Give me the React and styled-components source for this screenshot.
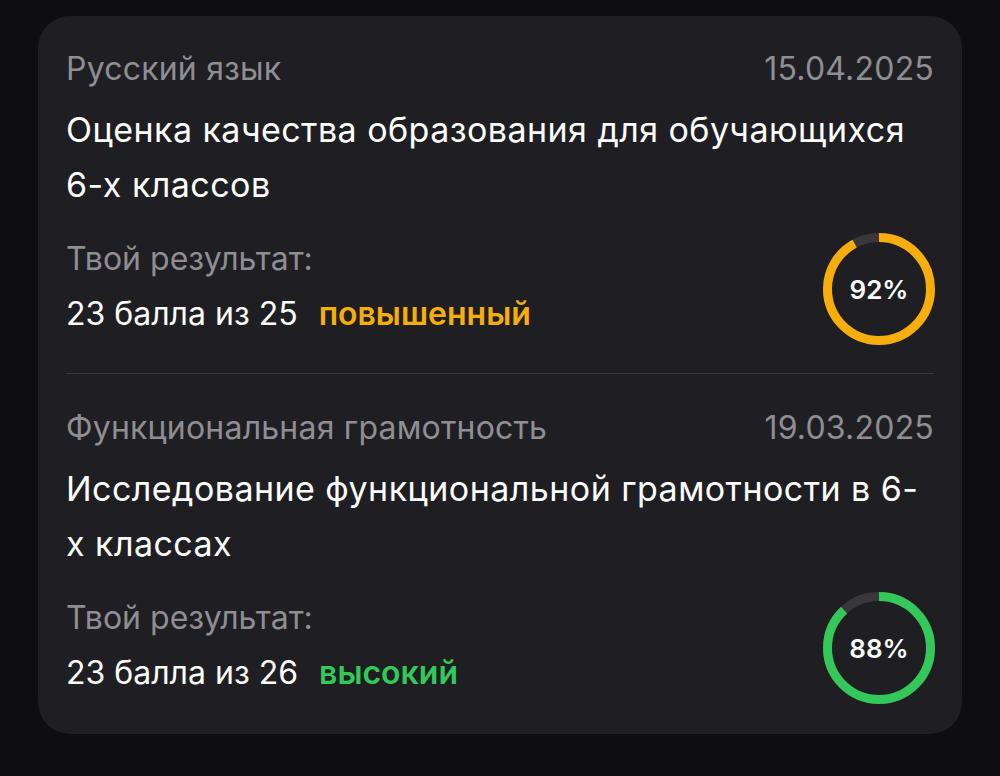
import React from "react";
import styled, { createGlobalStyle } from "styled-components";

const results = [
  {
    subject: "Русский язык",
    date: "15.04.2025",
    title: "Оценка качества образования для обучающихся 6-х классов",
    score: "23 балла из 25",
    level: "повышенный",
    color: "#f7ae0c",
    percent: 92,
  },
  {
    subject: "Функциональная грамотность",
    date: "19.03.2025",
    title: "Исследование функциональной грамотности в 6-х классах",
    score: "23 балла из 26",
    level: "высокий",
    color: "#34c759",
    percent: 88,
  },
];

const GlobalStyle = createGlobalStyle`
  body {
    margin: 0;
    background: #0e0d11;
    font-family: Inter, "Noto Sans", sans-serif;
    -webkit-font-smoothing: antialiased;
  }
`;

const Page = styled.div`
  padding: 16px 38px;
`;

const Card = styled.div`
  background: #1f1f23;
  border-radius: 32px;
  padding: 0 28px;
`;

const Section = styled.div`
  padding: ${(p) => (p.last ? "33px 0 30px" : "32px 0 28px")};
  border-bottom: ${(p) => (p.last ? "none" : "1px solid #36363a")};
`;

const Header = styled.div`
  display: flex;
  justify-content: space-between;
  align-items: center;
  height: 40px;
  font-size: 32px;
  letter-spacing: 0.2px;
  color: #8e8e93;
`;

const Title = styled.div`
  margin-top: 14px;
  margin-right: 8px;
  font-size: 34px;
  line-height: 55px;
  letter-spacing: 0.45px;
  color: #fff;
`;

const ResultRow = styled.div`
  display: flex;
  justify-content: space-between;
  align-items: center;
  margin-top: 21px;
`;

const ResultText = styled.div`
  padding-bottom: 5px;
`;

const Label = styled.div`
  font-size: 32px;
  line-height: 40px;
  color: #8e8e93;
`;

const Score = styled.div`
  margin-top: 15px;
  font-size: 32px;
  line-height: 40px;
  color: #fff;
`;

const Level = styled.span`
  margin-left: 21px;
  font-weight: 600;
  color: ${(p) => p.color};
`;

const RingWrap = styled.div`
  position: relative;
  width: 112px;
  height: 112px;
  margin-right: -1px;
`;

const RingText = styled.div`
  position: absolute;
  inset: 0;
  display: flex;
  align-items: center;
  justify-content: center;
  font-size: 26px;
  font-weight: 600;
  color: #fff;
`;

const Ring = ({ percent, color }) => {
  const r = 51.5;
  const c = 2 * Math.PI * r;
  return (
    <RingWrap>
      <svg width="112" height="112" viewBox="0 0 112 112">
        <circle cx="56" cy="56" r={r} fill="none" stroke="#38383b" strokeWidth="9" />
        <circle
          cx="56"
          cy="56"
          r={r}
          fill="none"
          stroke={color}
          strokeWidth="9"
          strokeDasharray={`${(c * percent) / 100} ${c}`}
          transform="rotate(-90 56 56)"
        />
      </svg>
      <RingText>{percent}%</RingText>
    </RingWrap>
  );
};

const App = () => {
  return (
    <>
      <GlobalStyle />
      <Page>
        <Card>
          {results.map((item, i) => (
            <Section key={item.date} last={i === results.length - 1}>
              <Header>
                <span>{item.subject}</span>
                <span>{item.date}</span>
              </Header>
              <Title>{item.title}</Title>
              <ResultRow>
                <ResultText>
                  <Label>Твой результат:</Label>
                  <Score>
                    {item.score}
                    <Level color={item.color}>{item.level}</Level>
                  </Score>
                </ResultText>
                <Ring percent={item.percent} color={item.color} />
              </ResultRow>
            </Section>
          ))}
        </Card>
      </Page>
    </>
  );
};

export default App;
